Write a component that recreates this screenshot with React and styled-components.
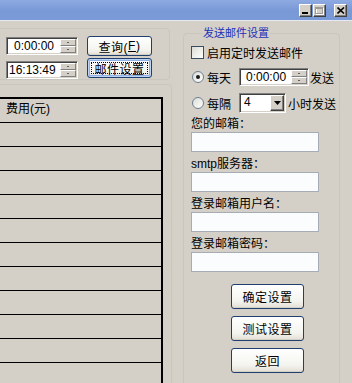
import React from 'react'
import styled, { createGlobalStyle } from 'styled-components'

const GlobalStyle = createGlobalStyle`
  html, body {
    margin: 0;
    padding: 0;
    background: #d4d0c8;
  }
  body {
    font-family: "Liberation Sans", "Noto Sans CJK SC", sans-serif;
    font-size: 12px;
    color: #000;
  }
`

const Window = styled.div`
  width: 352px;
  height: 383px;
  overflow: hidden;
  background: #d4d0c8;
  display: flex;
  flex-direction: column;
`

const TitleBar = styled.div`
  height: 21px;
  flex: none;
  box-sizing: border-box;
  background: linear-gradient(180deg, #8eaae2 0%, #7898d6 55%, #7b9bd8 100%);
  border-bottom: 1px solid #e6e9ef;
  display: flex;
  justify-content: flex-end;
  padding: 4px 5px 0 0;
`

const CapButton = styled.div`
  width: 13px;
  height: 13px;
  box-sizing: border-box;
  margin-left: ${p => p.gap}px;
  background: #d4d0c8;
  border: 1px solid;
  border-color: #fff #404040 #404040 #fff;
  box-shadow: inset -1px -1px #808080;
  display: flex;
  align-items: center;
  justify-content: center;
`

const Body = styled.div`
  flex: 1;
  display: flex;
  min-height: 0;
`

const LeftCol = styled.div`
  width: 176px;
  flex: none;
  display: flex;
  flex-direction: column;
`

const TopGroup = styled.div`
  margin: 7px 6px 0 -10px;
  height: 57px;
  box-sizing: border-box;
  border: 1px solid #c9c6bd;
  border-radius: 4px;
  display: flex;
  gap: 9px;
  padding: 8px 0 0 15px;
`

const Stack = styled.div`
  display: flex;
  flex-direction: column;
  gap: ${p => p.gap}px;
  margin-top: ${p => p.shift || 0}px;
`

const Sunken = styled.div`
  width: ${p => p.w}px;
  height: ${p => p.h}px;
  box-sizing: border-box;
  background: #fff;
  border: 1px solid;
  border-color: #808080 #fff #fff #808080;
  box-shadow: inset 1px 1px #404040, inset -1px -1px #d4d0c8;
  display: flex;
  align-items: stretch;
  padding: 1px;
`

const FieldText = styled.div`
  flex: 1;
  padding-left: ${p => p.pad}px;
  line-height: 15px;
  font-size: 12px;
  white-space: nowrap;
`

const Spin = styled.div`
  width: 16px;
  display: flex;
  flex-direction: column;
`

const SpinHalf = styled.div`
  flex: 1;
  background: #d4d0c8;
  border: 1px solid;
  border-color: #fff #808080 #808080 #fff;
  display: flex;
  align-items: center;
  justify-content: center;
  &::after {
    content: "";
    width: 2px;
    height: 1px;
    background: #606060;
  }
`

const DropButton = styled.div`
  width: 14px;
  box-sizing: border-box;
  background: #d4d0c8;
  border: 1px solid;
  border-color: #fff #404040 #404040 #fff;
  box-shadow: inset -1px -1px #808080;
  display: flex;
  align-items: center;
  justify-content: center;
`

const PushButton = styled.div`
  width: ${p => p.w}px;
  height: ${p => p.h}px;
  box-sizing: border-box;
  border: 1px solid #1f3f6e;
  border-radius: 3px;
  background: linear-gradient(180deg, #ffffff 0%, #f4f4ef 70%, #e2ded4 100%);
  box-shadow: ${p => (p.$default ? 'inset 0 0 0 1px #bcd3f5, inset 0 0 0 2px #8fb0e6' : 'inset 0 -1px #d6d0c4')};
  display: flex;
  align-items: center;
  justify-content: center;
  font-size: 12px;
  letter-spacing: 0.5px;
`

const FocusRing = styled.span`
  width: calc(100% - 6px);
  height: calc(100% - 6px);
  box-sizing: border-box;
  border: 1px dotted #000;
  display: flex;
  align-items: center;
  justify-content: center;
`

const TableGroup = styled.div`
  flex: 1;
  margin: 4px 4px 0 -10px;
  border: 1px solid #c9c6bd;
  border-bottom: none;
  border-radius: 4px 4px 0 0;
  padding: 12px 8px 0 0;
`

const Grid = styled.div`
  border-top: 2px solid #000;
  border-right: 2px solid #000;
`

const HeadCell = styled.div`
  height: 24px;
  box-sizing: border-box;
  border-bottom: 1px solid #000;
  padding: 2px 0 0 15px;
  line-height: 16px;
  font-size: 12px;
`

const Row = styled.div`
  height: 24px;
  box-sizing: border-box;
  border-bottom: 1px solid #000;
`

const RightCol = styled.div`
  flex: 1;
`

const MailGroup = styled.fieldset`
  margin: 5px 0 0 7px;
  width: 157px;
  height: 420px;
  min-width: 0;
  box-sizing: border-box;
  padding: 4px 0 0 7px;
  border: 1px solid #c9c6bd;
  border-radius: 4px;
  display: flex;
  flex-direction: column;
  align-items: flex-start;
`

const Legend = styled.legend`
  color: #2231b8;
  font-size: 11px;
  line-height: 14px;
  padding: 0 1px;
  margin-left: 11px;
`

const OptionRow = styled.div`
  display: flex;
  align-items: center;
  height: ${p => p.h}px;
  margin-top: ${p => p.top}px;
  white-space: nowrap;
`

const CheckBox = styled.div`
  width: 13px;
  height: 13px;
  box-sizing: border-box;
  border: 1px solid #3a4c60;
  background: linear-gradient(135deg, #dcdcd5, #ffffff);
  margin-right: 3px;
`

const Radio = styled.div`
  width: 12px;
  height: 12px;
  box-sizing: border-box;
  border-radius: 50%;
  border: 1px solid #6e7f92;
  background: linear-gradient(135deg, #dcdcd5, #ffffff);
  margin: 0 3px 0 1px;
  display: flex;
  align-items: center;
  justify-content: center;
  &::after {
    content: "";
    width: 4px;
    height: 4px;
    border-radius: 50%;
    background: ${p => (p.checked ? '#1a1a1a' : 'transparent')};
  }
`

const Gap = styled.span`
  width: ${p => p.w}px;
  flex: none;
`

const FieldLabel = styled.div`
  line-height: 16px;
  height: 16px;
  margin-top: ${p => p.top}px;
  font-size: 12px;
  white-space: nowrap;
`

const TextInput = styled.div`
  width: 128px;
  height: 20px;
  box-sizing: border-box;
  border: 1px solid #a5acb5;
  background: #fbfcfe;
`

const ButtonStack = styled.div`
  margin: 12px 0 0 40px;
  display: flex;
  flex-direction: column;
  gap: 7px;
`

function Picker({ value, pad, w }) {
  return (
    <Sunken w={w} h={18}>
      <FieldText pad={pad}>{value}</FieldText>
      <Spin>
        <SpinHalf />
        <SpinHalf />
      </Spin>
    </Sunken>
  )
}

const fields = ['您的邮箱：', 'smtp服务器：', '登录邮箱用户名：', '登录邮箱密码：']

export default function App() {
  return (
    <Window>
      <GlobalStyle />
      <TitleBar>
        <CapButton gap={0}>
          <svg width="7" height="7" viewBox="0 0 7 7"><rect x="0" y="5" width="6" height="2" fill="#000" /></svg>
        </CapButton>
        <CapButton gap={1}>
          <svg width="9" height="8" viewBox="0 0 9 8">
            <rect x="1.5" y="1.5" width="7" height="6" fill="none" stroke="#fff" />
            <rect x="0.5" y="0.5" width="7" height="6" fill="none" stroke="#9c9a94" />
            <rect x="0" y="0" width="8" height="2" fill="#9c9a94" />
          </svg>
        </CapButton>
        <CapButton gap={8}>
          <svg width="8" height="7" viewBox="0 0 8 7">
            <path d="M0.5 0.5 L7 6.5 M7 0.5 L0.5 6.5" stroke="#000" strokeWidth="1.6" />
          </svg>
        </CapButton>
      </TitleBar>
      <Body>
        <LeftCol>
          <TopGroup>
            <Stack gap={6}>
              <Picker w={72} pad={6} value="0:00:00" />
              <Picker w={72} pad={1} value="16:13:49" />
            </Stack>
            <Stack gap={2} shift={-1}>
              <PushButton w={65} h={20}>查询(<u>F</u>)</PushButton>
              <PushButton w={65} h={20} $default>
                <FocusRing>邮件设置</FocusRing>
              </PushButton>
            </Stack>
          </TopGroup>
          <TableGroup>
            <Grid>
              <HeadCell>费用(元)</HeadCell>
              {Array.from({ length: 11 }).map((_, i) => (
                <Row key={i} />
              ))}
            </Grid>
          </TableGroup>
        </LeftCol>
        <RightCol>
          <MailGroup>
            <Legend>发送邮件设置</Legend>
            <OptionRow h={16} top={0}>
              <CheckBox />
              启用定时发送邮件
            </OptionRow>
            <OptionRow h={20} top={7}>
              <Radio checked />
              每天
              <Gap w={8} />
              <Picker w={70} pad={5} value="0:00:00" />
              <Gap w={1} />
              发送
            </OptionRow>
            <OptionRow h={20} top={6}>
              <Radio />
              每隔
              <Gap w={8} />
              <Sunken w={47} h={20}>
                <FieldText pad={3}>4</FieldText>
                <DropButton>
                  <svg width="7" height="4" viewBox="0 0 7 4"><path d="M0 0 H7 L3.5 4 Z" fill="#000" /></svg>
                </DropButton>
              </Sunken>
              <Gap w={2} />
              小时发送
            </OptionRow>
            {fields.map((label, i) => (
              <React.Fragment key={label}>
                <FieldLabel top={i === 0 ? 3 : 4}>{label}</FieldLabel>
                <TextInput />
              </React.Fragment>
            ))}
            <ButtonStack>
              <PushButton w={73} h={25}>确定设置</PushButton>
              <PushButton w={73} h={25}>测试设置</PushButton>
              <PushButton w={73} h={25}>返回</PushButton>
            </ButtonStack>
          </MailGroup>
        </RightCol>
      </Body>
    </Window>
  )
}
